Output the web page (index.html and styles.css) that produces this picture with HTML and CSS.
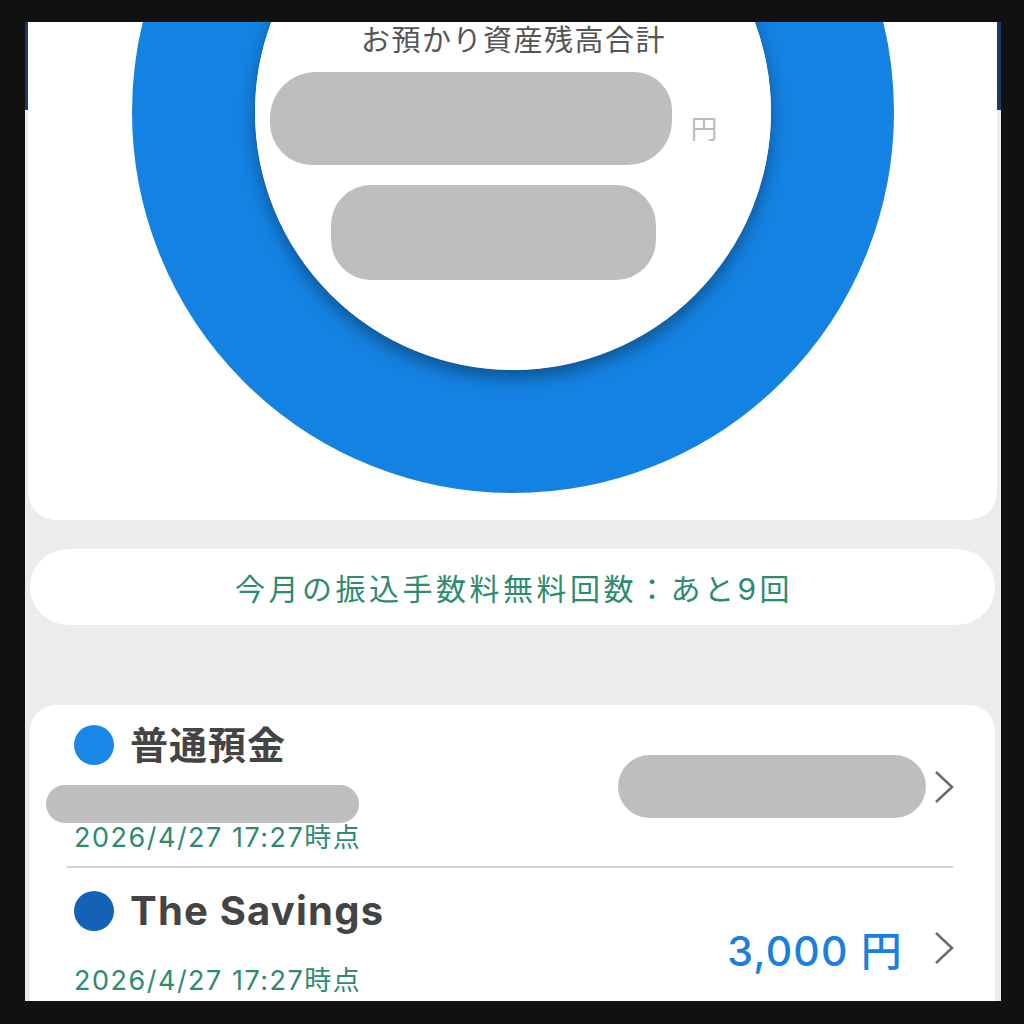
FILE: index.html
```html
<!DOCTYPE html>
<html lang="ja">

<head>
    <meta charset="UTF-8">
    <meta name="viewport" content="width=device-width, initial-scale=1.0">
    <title>残高照会</title>
    <link rel="stylesheet" href="styles.css">
</head>

<body>

    <div class="screen">
        <section class="summary">
            <div class="ring">
                <div class="ring-inner">
                    <p class="summary-title">お預かり資産残高合計</p>
                    <div class="total-row">
                        <span class="mask mask-total"></span>
                        <span class="yen">円</span>
                    </div>
                    <span class="mask mask-sub"></span>
                </div>
            </div>
        </section>

        <div class="notice">今月の振込手数料無料回数：あと9回</div>

        <section class="accounts">
            <div class="account">
                <div class="account-info">
                    <div class="account-name"><span class="dot"></span>普通預金</div>
                    <span class="mask mask-number"></span>
                    <div class="account-date">2026/4/27 17:27時点</div>
                </div>
                <div class="account-balance">
                    <span class="mask mask-balance"></span>
                    <svg class="chevron" viewBox="0 0 22 36"><polyline points="3,3 19,18 3,33" /></svg>
                </div>
            </div>

            <div class="divider"></div>

            <div class="account account-savings">
                <div class="account-info">
                    <div class="account-name latin"><span class="dot dot-dark"></span>The Savings</div>
                    <div class="account-date">2026/4/27 17:27時点</div>
                </div>
                <div class="account-balance">
                    <span class="amount">3,000 円</span>
                    <svg class="chevron" viewBox="0 0 22 36"><polyline points="3,3 19,18 3,33" /></svg>
                </div>
            </div>
        </section>
    </div>

</body>

</html>
```

FILE: styles.css
```css
body {
    margin: 0;
    background: #111;
    font-family: Inter, "Noto Sans CJK JP", sans-serif;
}

.screen {
    margin: 22px 23px 0 25px;
    height: 979px;
    overflow: hidden;
    padding: 0 4px 0 3px;
    background: linear-gradient(#1d3a66 0, #1d3a66 88px, #ececec 88px);
}

/* 資産合計 */
.summary {
    height: 498px;
    overflow: hidden;
    background: white;
    border-radius: 0 0 28px 28px;
}

.ring {
    width: 516px;
    height: 516px;
    margin: -291px auto 0;
    border: 123px solid #1482e2;
    border-radius: 50%;
}

.ring-inner {
    box-sizing: border-box;
    width: 100%;
    height: 100%;
    padding-top: 170px;
    border-radius: 50%;
    background: white;
    box-shadow: 0 8px 16px rgba(0, 0, 0, 0.35);
    display: flex;
    flex-direction: column;
    align-items: center;
}

.summary-title {
    margin: 0;
    padding-left: 2px;
    font-size: 29px;
    line-height: 34px;
    letter-spacing: 1.5px;
    color: #555;
}

.mask {
    display: block;
    background: #bebebe;
}

.total-row {
    align-self: flex-start;
    margin: 14px 0 0 15px;
    display: flex;
    align-items: center;
    gap: 19px;
}

.mask-total {
    width: 402px;
    height: 93px;
    border-radius: 46px 38px 44px 42px;
}

.yen {
    padding-top: 18px;
    font-size: 27px;
    color: #bbb;
}

.mask-sub {
    align-self: flex-start;
    margin: 20px 0 0 76px;
    width: 325px;
    height: 95px;
    border-radius: 40px;
}

/* お知らせ */
.notice {
    margin: 29px 2px 0;
    height: 76px;
    padding-left: 3px;
    border-radius: 38px;
    background: white;
    display: flex;
    align-items: center;
    justify-content: center;
    font-size: 30px;
    letter-spacing: 3.5px;
    color: #2d8b70;
}

/* 口座一覧 */
.accounts {
    margin: 80px 2px 0;
    background: white;
    border-radius: 26px 26px 0 0;
    padding-bottom: 40px;
}

.account {
    display: flex;
    align-items: center;
    padding: 14px 40px 12px 44px;
}

.account-name {
    display: flex;
    align-items: center;
    gap: 16px;
    font-size: 38px;
    line-height: 52px;
    font-weight: 700;
    letter-spacing: 1px;
    color: #444;
}

.account-name.latin {
    font-size: 40px;
    letter-spacing: 1.2px;
}

.dot {
    flex-shrink: 0;
    width: 40px;
    height: 40px;
    border-radius: 50%;
    background: #1a86e8;
}

.dot-dark {
    background: #1462b8;
}

.mask-number {
    margin: 14px 0 0 -28px;
    width: 313px;
    height: 38px;
    border-radius: 19px;
}

.account-date {
    margin-top: -1px;
    font-size: 27px;
    line-height: 32px;
    letter-spacing: 1.5px;
    color: #2d8b70;
}

.account-savings {
    padding-top: 17px;
}

.account-savings .account-date {
    margin-top: 28px;
}

.account-balance {
    margin-left: auto;
    display: flex;
    align-items: center;
    gap: 7px;
}

.account-savings .account-balance {
    padding-top: 14px;
}

.mask-balance {
    width: 308px;
    height: 63px;
    border-radius: 32px;
}

.amount {
    margin-right: 23px;
    font-size: 41px;
    font-weight: 500;
    letter-spacing: 1.2px;
    color: #1a7fdf;
}

.chevron {
    width: 22px;
    height: 36px;
    fill: none;
    stroke: #6b6b6b;
    stroke-width: 2.5;
}

.divider {
    height: 2px;
    margin: 0 42px 0 37px;
    background: #d2d2d2;
}
```
